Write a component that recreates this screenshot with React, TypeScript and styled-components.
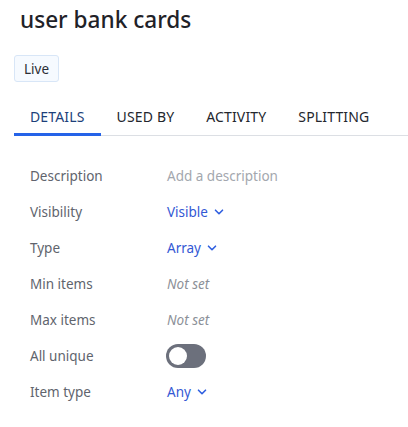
import React, { useState } from 'react';
import styled, { createGlobalStyle } from 'styled-components';

// ===== Global =====
const GlobalStyle = createGlobalStyle`
  * { box-sizing: border-box; }
  body {
    margin: 0;
    background: #ffffff;
    font-family: "Noto Sans", "Open Sans", sans-serif;
    color: #1f2228;
  }
`;

// ===== Types =====
type TabType = 'details' | 'usedBy' | 'activity' | 'splitting';

// ===== Styled Components =====
const Page = styled.div`
  display: flex;
  flex-direction: column;
  width: 408px;
  padding-top: 4px;
`;

const Title = styled.h1`
  margin: 0 0 0 20px;
  font-size: 22.6px;
  line-height: 32px;
  font-weight: 500;
  color: #1f2228;
`;

const Badge = styled.span`
  align-self: flex-start;
  margin: 19px 0 0 14px;
  height: 27px;
  padding: 0 9px;
  display: flex;
  align-items: center;
  font-size: 13.5px;
  color: #2b2e35;
  background: #f6faff;
  border: 1px solid #d8e6f7;
  border-radius: 3px;
`;

const TabBar = styled.nav`
  display: flex;
  margin: 18px 0 0 14px;
  border-bottom: 1px solid #dcdfe4;
`;

const Tab = styled.button<{ $active: boolean }>`
  height: 36px;
  margin-bottom: -1px;
  padding: 0 16px 1px;
  background: transparent;
  border: none;
  border-bottom: 3px solid ${p => (p.$active ? '#2563e8' : 'transparent')};
  color: ${p => (p.$active ? '#1d3f7a' : '#23262d')};
  font-family: inherit;
  font-size: 14px;
  letter-spacing: 0.15px;
  font-weight: 400;
  text-transform: uppercase;
  cursor: pointer;
`;

const Fields = styled.div`
  display: grid;
  grid-template-columns: 137px 1fr;
  grid-auto-rows: 36px;
  align-items: center;
  padding: 22px 0 0 30px;
`;

const Label = styled.div`
  font-size: 13.5px;
  color: #60646d;
`;

const Value = styled.div<{ $tone?: 'link' | 'muted' | 'unset' }>`
  display: flex;
  align-items: center;
  gap: 6px;
  font-size: 13.5px;
  color: ${p =>
    p.$tone === 'link' ? '#3358d4' : p.$tone === 'muted' ? '#a3a7ae' : '#8c9098'};
  font-style: ${p => (p.$tone === 'unset' ? 'italic' : 'normal')};
  cursor: ${p => (p.$tone === 'link' ? 'pointer' : 'default')};
`;

const Toggle = styled.button<{ $on: boolean }>`
  position: relative;
  width: 40px;
  height: 24px;
  margin-left: -1px;
  border: none;
  border-radius: 12px;
  background: ${p => (p.$on ? '#2563e8' : '#6c707c')};
  cursor: pointer;
  padding: 0;

  &::after {
    content: '';
    position: absolute;
    top: 3px;
    left: ${p => (p.$on ? '19px' : '3px')};
    width: 18px;
    height: 18px;
    border-radius: 50%;
    background: #ffffff;
  }
`;

const Chevron = () => (
  <svg width="10" height="10" viewBox="0 0 10 10" fill="none">
    <path d="M1.5 3.2 L5 6.7 L8.5 3.2" stroke="#2f5fe0" strokeWidth="1.6" strokeLinecap="round" strokeLinejoin="round" />
  </svg>
);

// ===== Component =====
export default function App() {
  const [activeTab, setActiveTab] = useState<TabType>('details');
  const [unique, setUnique] = useState(false);

  const tabs: { id: TabType; label: string }[] = [
    { id: 'details', label: 'Details' },
    { id: 'usedBy', label: 'Used by' },
    { id: 'activity', label: 'Activity' },
    { id: 'splitting', label: 'Splitting' },
  ];

  return (
    <>
      <GlobalStyle />
      <Page>
        <Title>user bank cards</Title>
        <Badge>Live</Badge>
        <TabBar>
          {tabs.map(t => (
            <Tab key={t.id} $active={activeTab === t.id} onClick={() => setActiveTab(t.id)}>
              {t.label}
            </Tab>
          ))}
        </TabBar>
        <Fields>
          <Label>Description</Label>
          <Value $tone="muted">Add a description</Value>

          <Label>Visibility</Label>
          <Value $tone="link">Visible <Chevron /></Value>

          <Label>Type</Label>
          <Value $tone="link">Array <Chevron /></Value>

          <Label>Min items</Label>
          <Value $tone="unset">Not set</Value>

          <Label>Max items</Label>
          <Value $tone="unset">Not set</Value>

          <Label>All unique</Label>
          <Value>
            <Toggle $on={unique} onClick={() => setUnique(!unique)} aria-label="All unique" />
          </Value>

          <Label>Item type</Label>
          <Value $tone="link">Any <Chevron /></Value>
        </Fields>
      </Page>
    </>
  );
}
